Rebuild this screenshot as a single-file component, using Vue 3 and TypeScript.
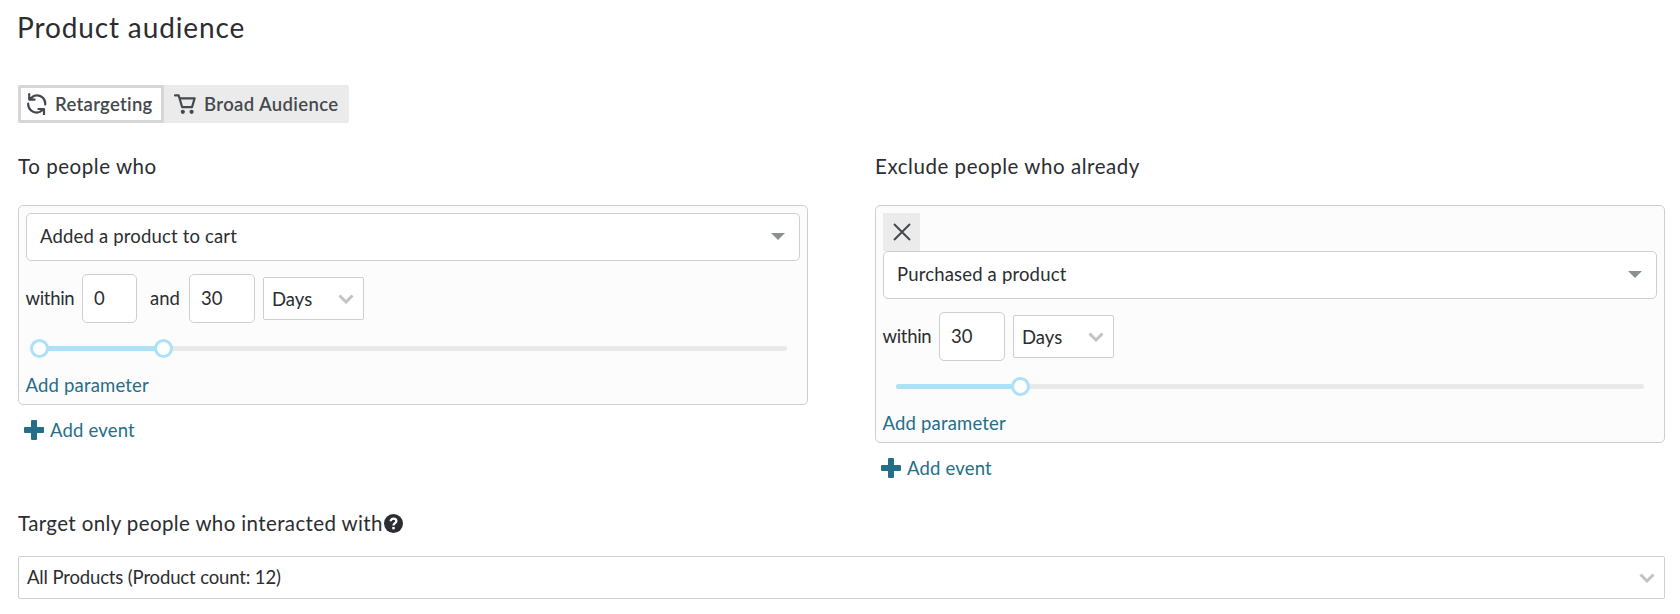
<script setup lang="ts">
import { ref } from 'vue'

interface AudienceRule {
  title: string
  event: string
  from?: number
  to: number
  removable: boolean
}

const rules = ref<AudienceRule[]>([
  { title: 'To people who', event: 'Added a product to cart', from: 0, to: 30, removable: false },
  { title: 'Exclude people who already', event: 'Purchased a product', to: 30, removable: true },
])

const maxDays = 180
const percent = (days: number): string => `${(days / maxDays) * 100}%`
</script>

<template>
  <main class="page">
    <h1 class="title">Product audience</h1>

    <div class="tabs">
      <button class="tab active" type="button">
        <svg class="tab-icon" viewBox="0 0 20 22" width="20" height="22">
          <path d="M7.4 2.8A8.2 8.2 0 0 1 18.2 11.4M2.2 1.2V6.6H7.6M2.6 6.4L6.2 3.4M1.2 10.6A8.4 8.4 0 0 0 11 19.4M11.4 16H17V21.4M16.6 16.4L12.8 18.9" />
        </svg>
        <span>Retargeting</span>
      </button>
      <button class="tab broad" type="button">
        <svg class="tab-icon" viewBox="0 0 22 20" width="22" height="20">
          <path d="M1 1.3H4.6L8.2 13.2H18L20.6 4.4H5.6" />
          <circle class="wheel" cx="8.8" cy="17.8" r="2.1" />
          <circle class="wheel" cx="17.6" cy="17.8" r="2.1" />
        </svg>
        <span>Broad Audience</span>
      </button>
    </div>

    <div class="columns">
      <section v-for="rule in rules" :key="rule.title" class="column">
        <h2 class="heading">{{ rule.title }}</h2>
        <div class="panel">
          <button v-if="rule.removable" class="remove" type="button" aria-label="Remove">
            <svg viewBox="0 0 18 18" width="18" height="18"><path d="M1 1L17 17M17 1L1 17" /></svg>
          </button>
          <div class="event-select">
            <span>{{ rule.event }}</span>
            <svg class="caret" viewBox="0 0 14 7" width="14" height="7"><path d="M0 0H14L7 7Z" /></svg>
          </div>
          <div class="range">
            <span class="within">within</span>
            <template v-if="rule.from !== undefined">
              <span class="number short">{{ rule.from }}</span>
              <span class="and">and</span>
            </template>
            <span class="number">{{ rule.to }}</span>
            <span class="unit">
              <span>Days</span>
              <svg class="chevron" viewBox="0 0 16 10" width="16" height="10"><path d="M1.5 1.5L8 8L14.5 1.5" /></svg>
            </span>
          </div>
          <div class="slider">
            <div class="fill" :style="{ width: percent(rule.to) }"></div>
            <i v-if="rule.from !== undefined" class="knob" :style="{ left: percent(rule.from) }"></i>
            <i class="knob" :style="{ left: percent(rule.to) }"></i>
          </div>
          <a class="link parameter">Add parameter</a>
        </div>
        <a class="link add-event">
          <svg viewBox="0 0 20 20" width="20" height="20">
            <path d="M8 0H12Q13 0 13 1V7H19Q20 7 20 8V12Q20 13 19 13H13V19Q13 20 12 20H8Q7 20 7 19V13H1Q0 13 0 12V8Q0 7 1 7H7V1Q7 0 8 0Z" />
          </svg>
          <span>Add event</span>
        </a>
      </section>
    </div>

    <h2 class="heading target">
      <span>Target only people who interacted with</span>
      <svg class="help" viewBox="0 0 20 20" width="19" height="19">
        <circle cx="10" cy="10" r="10" />
        <path d="M7 7.6C7 3.9 13 4.1 13 7.5C13 9.6 10 9.7 10 12" />
        <rect x="8.7" y="13.6" width="2.6" height="2.5" />
      </svg>
    </h2>
    <div class="product-select">
      <span>All Products (Product count: 12)</span>
      <svg class="chevron" viewBox="0 0 16 10" width="16" height="10"><path d="M1.5 1.5L8 8L14.5 1.5" /></svg>
    </div>
  </main>
</template>

<style>
body {
  margin: 0;
  background: #fff;
}
</style>

<style scoped>
.page {
  box-sizing: border-box;
  width: 1680px;
  height: 614px;
  padding: 8px 15px 0 18px;
  overflow: hidden;
  font-family: Lato, "Liberation Sans", sans-serif;
  font-size: 18.5px;
  color: #2b2d31;
}
.page * {
  box-sizing: border-box;
}
.page span {
  white-space: nowrap;
}
.title {
  margin: 0 0 0 -1px;
  height: 77px;
  font-size: 28px;
  line-height: 38px;
  font-weight: 400;
  letter-spacing: 0.87px;
}
.tabs {
  display: flex;
  width: 331px;
  height: 38px;
  background: #ebebeb;
  border-radius: 2px;
}
.tab {
  display: flex;
  align-items: center;
  gap: 8px;
  padding: 0 0 0 10px;
  border: 0;
  background: none;
  font: 600 18.5px Lato, "Liberation Sans", sans-serif;
  letter-spacing: 0.3px;
  color: #44494e;
}
.tab.broad {
  gap: 8px;
  letter-spacing: 0.37px;
}
.tab.active {
  width: 146px;
  padding-left: 6px;
  background: #fff;
  border: 3px solid #d6d6d6;
  border-radius: 2px;
}
.tab-icon {
  flex: none;
  fill: none;
  stroke: #44494e;
  stroke-width: 2.2;
  stroke-linecap: round;
  stroke-linejoin: round;
}
.wheel {
  fill: #44494e;
  stroke: none;
}
.columns {
  display: flex;
  gap: 67px;
  height: 383px;
}
.column {
  width: 790px;
}
.heading {
  margin: 0;
  padding-top: 29px;
  height: 82px;
  font-size: 20.5px;
  line-height: 28px;
  font-weight: 400;
  letter-spacing: 0.55px;
}
.panel {
  padding: 7px 7px 5px;
  border: 1px solid #cfcfcf;
  border-radius: 5px;
  background: #fcfcfc;
}
.remove {
  display: flex;
  align-items: center;
  justify-content: center;
  width: 37px;
  height: 38px;
  padding: 0;
  border: 0;
  background: #ebebeb;
}
.remove path {
  fill: none;
  stroke: #44494e;
  stroke-width: 2;
}
.event-select {
  display: flex;
  align-items: center;
  justify-content: space-between;
  height: 48px;
  padding: 0 14px 2px 13px;
  border: 1px solid #cfcfcf;
  border-radius: 5px;
  background: #fff;
  letter-spacing: 0.17px;
}
.caret {
  fill: #8b9093;
}
.range {
  display: flex;
  align-items: center;
  margin-top: 13px;
  height: 49px;
}
.within {
  width: 56.5px;
  margin-left: -0.5px;
  padding-bottom: 1px;
  letter-spacing: -0.3px;
}
.number {
  width: 66px;
  height: 49px;
  padding: 0 11px 2px;
  line-height: 46px;
  border: 1px solid #cfcfcf;
  border-radius: 5px;
  background: #fff;
}
.number.short {
  width: 55px;
}
.and {
  width: 52px;
  padding: 0 0 1px 13px;
}
.unit {
  display: flex;
  align-items: center;
  justify-content: space-between;
  width: 101px;
  height: 43px;
  margin-left: 8px;
  padding: 0 9px 0 8px;
  border: 1px solid #cfcfcf;
  border-radius: 2px;
  background: #fff;
}
.chevron {
  flex: none;
  fill: none;
  stroke: #c4c4c4;
  stroke-width: 3;
}
.slider {
  position: relative;
  margin: 23px 13px 0;
  height: 5px;
  border-radius: 3px;
  background: #e9e9e9;
}
.fill {
  height: 5px;
  border-radius: 3px;
  background: #ade1f8;
}
.knob {
  position: absolute;
  top: -7px;
  width: 19px;
  height: 19px;
  margin-left: -9.5px;
  border: 3px solid #ade1f8;
  border-radius: 50%;
  background: #fff;
}
.link {
  color: #256e88;
  letter-spacing: 0.18px;
}
.parameter {
  display: block;
  margin: 20px 0 0 -0.5px;
  height: 28px;
  line-height: 28px;
}
.add-event {
  display: flex;
  align-items: center;
  gap: 6px;
  margin: 11px 0 0 6px;
  height: 28px;
}
.add-event svg {
  fill: #256e88;
}
.target {
  display: flex;
  align-items: flex-start;
  gap: 1px;
  height: 50px;
  padding: 3px 0 0;
  letter-spacing: 0.38px;
}
.help {
  margin-top: 5px;
}
.help circle {
  fill: #2b2d31;
}
.help path {
  fill: none;
  stroke: #fff;
  stroke-width: 2.4;
}
.help rect {
  fill: #fff;
}
.product-select {
  display: flex;
  align-items: center;
  justify-content: space-between;
  width: 1647px;
  height: 43px;
  padding: 0 9px 0 8px;
  border: 1px solid #cfcfcf;
  border-radius: 2px;
  letter-spacing: -0.14px;
}
.product-select span {
  padding-bottom: 1px;
}
</style>
